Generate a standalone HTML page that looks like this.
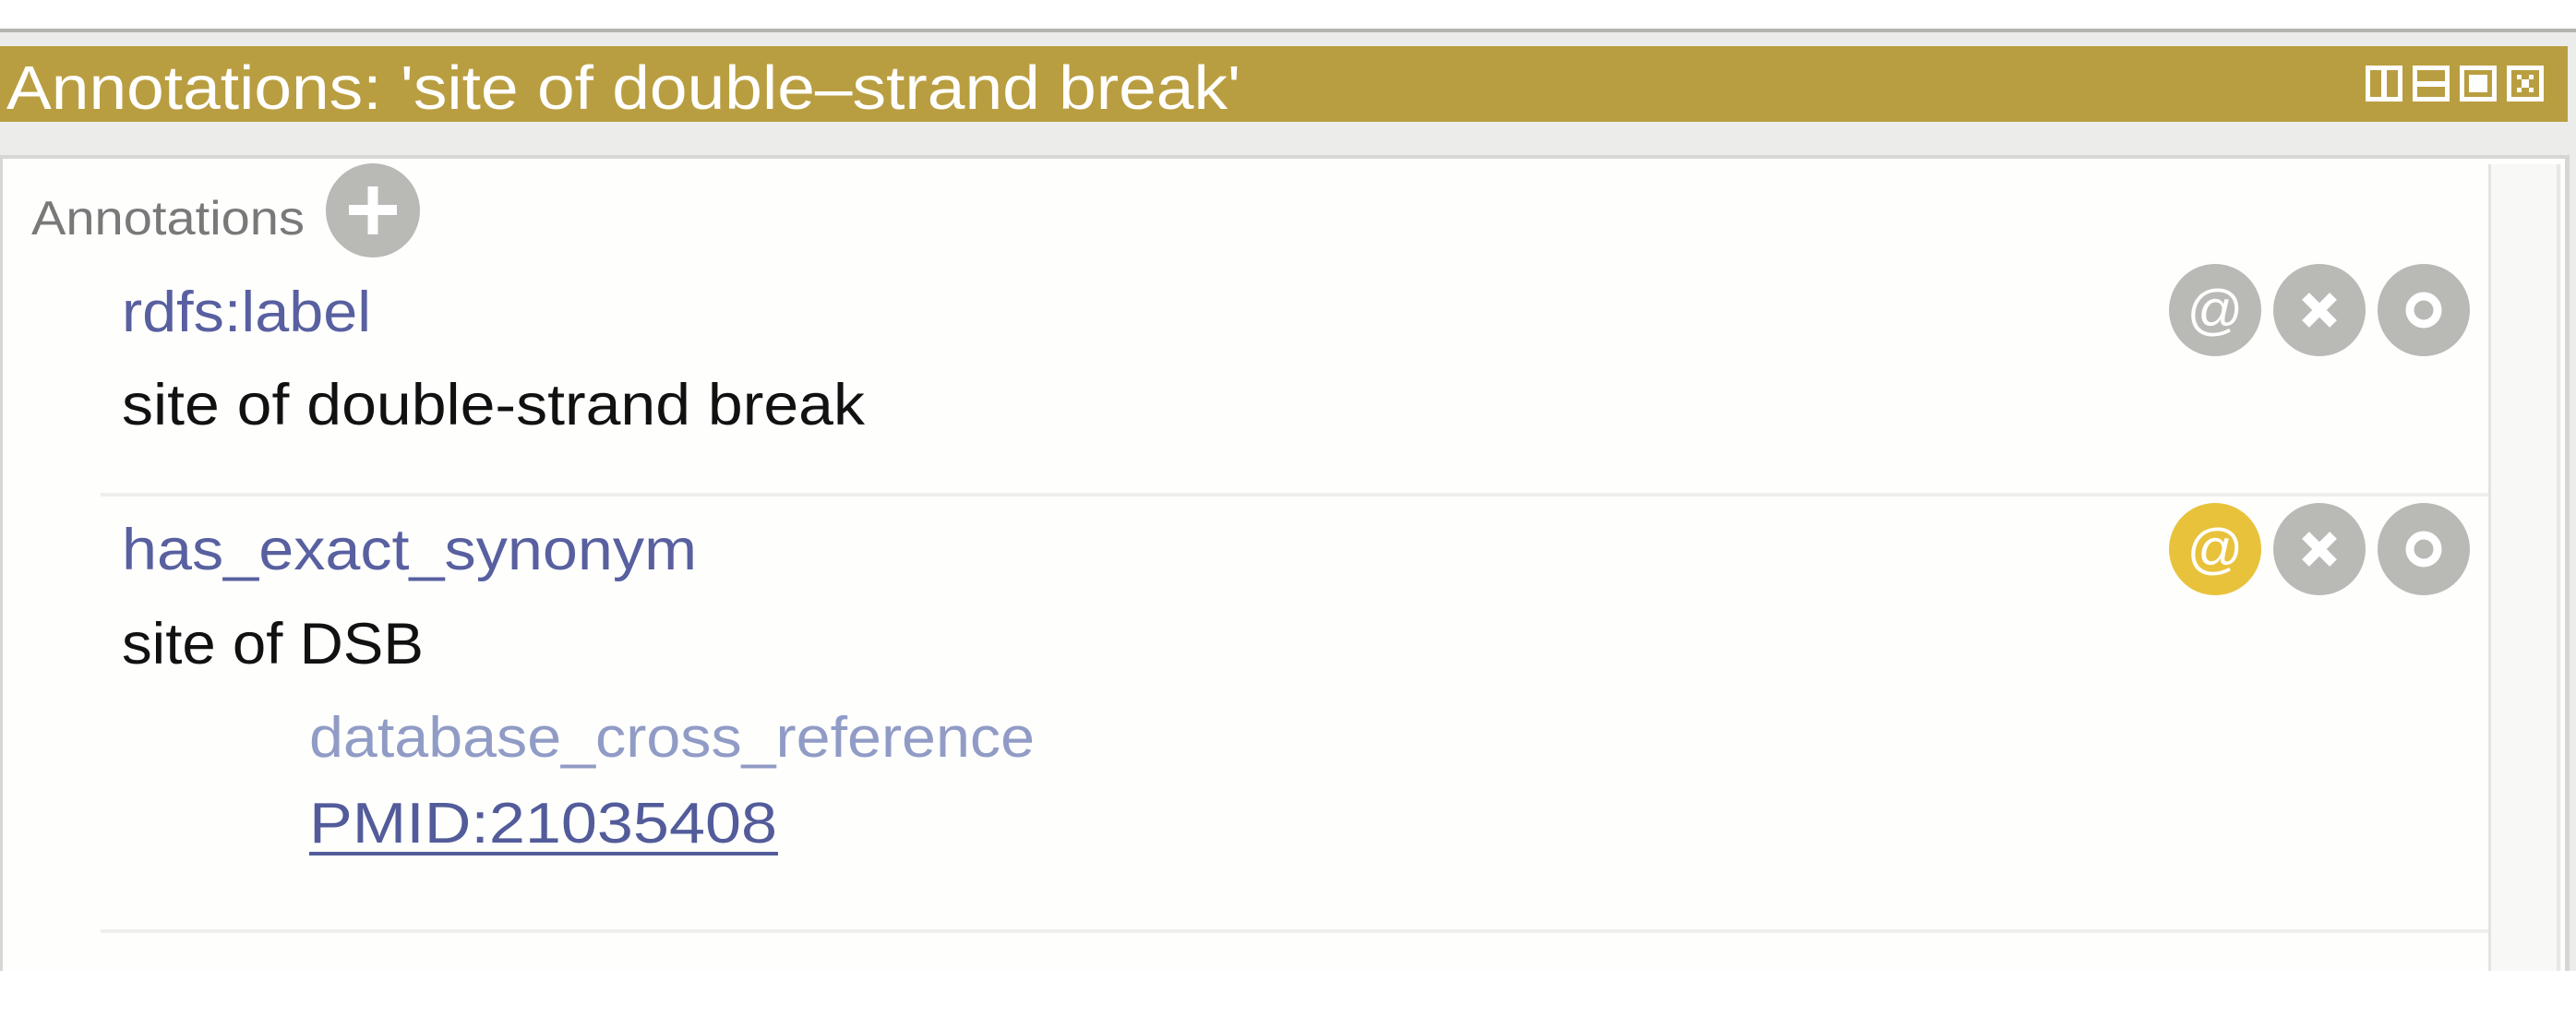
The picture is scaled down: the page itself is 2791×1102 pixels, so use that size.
<!DOCTYPE html>
<html><head><meta charset="utf-8">
<style>
html,body{margin:0;padding:0;}
body{width:2791px;height:1102px;position:relative;overflow:hidden;background:#fff;font-family:"Liberation Sans",sans-serif;}
.a{position:absolute;}
.t{position:absolute;white-space:nowrap;transform-origin:0 0;line-height:1;}
</style></head><body>
<div class="a" style="left:0;top:31px;width:2791px;height:4px;background:#b3b5b0"></div>
<div class="a" style="left:0;top:35px;width:2791px;height:1067px;background:#ecedea"></div>
<div class="a" style="left:0;top:50px;width:2782px;height:82px;background:#b99e41"></div>
<div class="a" style="left:0;top:1052px;width:2791px;height:50px;background:#fff"></div>
<!-- panel -->
<div class="a" style="left:0;top:168px;width:2784px;height:884px;background:#d6d7d3"></div>
<div class="a" style="left:3px;top:172px;width:2776px;height:880px;background:#fefefd"></div>
<div class="a" style="left:2696px;top:178px;width:79px;height:874px;background:#f8f8f7;border-left:3px solid #e3e4e0;box-sizing:border-box"></div>
<div class="a" style="left:2770px;top:178px;width:4px;height:874px;background:#e8e9e6"></div>
<!-- separators -->
<div class="a" style="left:109px;top:534px;width:2587px;height:4px;background:#efefed"></div>
<div class="a" style="left:109px;top:1007px;width:2587px;height:4px;background:#efefed"></div>

<!-- title -->
<div class="t" id="t1" style="left:7px;top:62px;font-size:67px;color:#fff;">Annotations: 'site of double–strand break'</div>
<svg class="a" style="left:2563px;top:71px" width="200" height="40" viewBox="0 0 200 40">
 <g fill="none" stroke="#fff" stroke-width="5">
  <rect x="2.5" y="2.5" width="35" height="34"/>
  <rect x="53.5" y="2.5" width="35" height="34"/>
  <rect x="104.5" y="2.5" width="35" height="34"/>
  <rect x="155.5" y="2.5" width="35" height="34"/>
 </g>
 <rect x="17" y="2" width="6" height="36" fill="#fff"/>
 <rect x="53" y="17" width="36" height="6" fill="#fff"/>
 <rect x="112" y="10" width="20" height="19" fill="#fff"/>
 <g fill="#fff"><rect x="164" y="10" width="5" height="5"/><rect x="177" y="10" width="5" height="5"/><rect x="164" y="24" width="5" height="5"/><rect x="177" y="24" width="5" height="5"/><rect x="169" y="15" width="8" height="9"/></g>
</svg>

<!-- annotations header -->
<div class="t" id="t2" style="left:34px;top:211px;font-size:52px;color:#797979;">Annotations</div>
<svg class="a" style="left:353px;top:177px" width="102" height="102">
 <circle cx="51" cy="51" r="51" fill="#b9bab5"/>
 <rect x="25" y="45" width="52" height="11" fill="#fff"/><rect x="45.5" y="25" width="11" height="52" fill="#fff"/>
</svg>

<div class="t" id="t3" style="left:132px;top:308px;font-size:62px;color:#5860a0;">rdfs:label</div>
<div class="t" id="t4" style="left:132px;top:408px;font-size:63px;color:#111;">site of double-strand break</div>
<div class="t" id="t5" style="left:132px;top:565px;font-size:63px;color:#5860a0;">has_exact_synonym</div>
<div class="t" id="t6" style="left:132px;top:667px;font-size:63px;color:#111;">site of DSB</div>
<div class="t" id="t7" style="left:335px;top:769px;font-size:62px;color:#919cc6;">database_cross_reference</div>
<div class="t" id="t8" style="left:335px;top:862px;font-size:62px;color:#535c9a;">PMID:21035408</div>
<div class="a" style="left:335px;top:923px;width:508px;height:4px;background:#535c9a"></div>

<!-- buttons row 1 -->
<svg class="a" style="left:2349px;top:285px" width="330" height="102">
 <circle cx="51" cy="51" r="50" fill="#b9bab5"/>
 <text x="51" y="71" text-anchor="middle" font-family="Liberation Sans,sans-serif" font-size="60" fill="#fff">@</text>
 <circle cx="164" cy="51" r="50" fill="#b9bab5"/>
 <path d="M149 36 L179 66 M179 36 L149 66" stroke="#fff" stroke-width="11"/>
 <circle cx="277" cy="51" r="50" fill="#b9bab5"/>
 <circle cx="277" cy="51" r="15" fill="none" stroke="#fff" stroke-width="9"/>
</svg>
<svg class="a" style="left:2349px;top:544px" width="330" height="102">
 <circle cx="51" cy="51" r="50" fill="#e8c23a"/>
 <text x="51" y="71" text-anchor="middle" font-family="Liberation Sans,sans-serif" font-size="60" fill="#fff">@</text>
 <circle cx="164" cy="51" r="50" fill="#b9bab5"/>
 <path d="M149 36 L179 66 M179 36 L149 66" stroke="#fff" stroke-width="11"/>
 <circle cx="277" cy="51" r="50" fill="#b9bab5"/>
 <circle cx="277" cy="51" r="15" fill="none" stroke="#fff" stroke-width="9"/>
</svg>

<script>
var W={t1:1337,t2:296,t3:270,t4:805,t5:623,t6:327,t7:786,t8:507};
for(var k in W){var e=document.getElementById(k);var w=e.getBoundingClientRect().width;if(w>0)e.style.transform='scaleX('+(W[k]/w)+')';}
</script>
</body></html>
